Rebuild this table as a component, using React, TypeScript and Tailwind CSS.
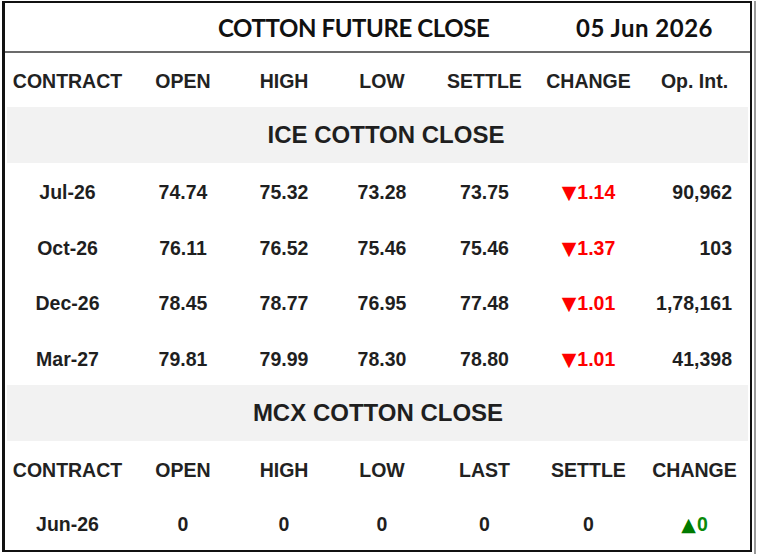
import React from "react";

const cols = "grid grid-cols-[125px_106px_96px_100px_105px_103px_109px]";

const ice = [
  ["Jul-26", "74.74", "75.32", "73.28", "73.75", "1.14", "90,962"],
  ["Oct-26", "76.11", "76.52", "75.46", "75.46", "1.37", "103"],
  ["Dec-26", "78.45", "78.77", "76.95", "77.48", "1.01", "1,78,161"],
  ["Mar-27", "79.81", "79.99", "78.30", "78.80", "1.01", "41,398"],
];

function Band({ label, pad }: { label: string; pad: string }) {
  return (
    <div className={`mx-[2px] h-[56px] bg-[#f2f2f2] flex items-center justify-center text-[24px] font-bold text-[#1f1f1f] ${pad}`}>
      {label}
    </div>
  );
}

function HeaderRow({ labels, h }: { labels: string[]; h: string }) {
  return (
    <div className={`${cols} ${h} pt-[3px] items-center text-[19.5px] font-bold text-[#222]`}>
      {labels.map((l, i) => (
        <div key={i} className="text-center">
          {l}
        </div>
      ))}
    </div>
  );
}

export default function App() {
  return (
    <div className="w-[757px] h-[555px] bg-white font-['Liberation_Sans',Arial,sans-serif]">
      <div className="pt-[1px] pl-[2px]">
        <div className="w-[754px] h-[553px] border-r-[2px] border-[#9a9a9a]">
          <div className="w-[750px] h-[551px] border-[2px] border-[#111] border-l-[3px] flex flex-col">
            <div className="h-[48px] pt-[1px] flex items-center text-[#111] font-bold text-[24px] font-['Lato','Open_Sans',sans-serif]">
              <div className="ml-[213px] w-[271px] tracking-[-0.4px] whitespace-nowrap">COTTON FUTURE CLOSE</div>
              <div className="ml-[87px] tracking-[0.5px] whitespace-nowrap">05 Jun 2026</div>
            </div>
            <div className="h-[2px] bg-[#6b6b6b]" />
            <HeaderRow h="h-[54px]" labels={["CONTRACT", "OPEN", "HIGH", "LOW", "SETTLE", "CHANGE", "Op. Int."]} />
            <Band label="ICE COTTON CLOSE" pad="pl-[17px]" />
            {ice.map((r, i) => (
              <div key={i} className={`${cols} h-[55.5px] pt-[4px] items-center text-[19.5px] font-bold text-[#1f1f1f]`}>
                <div className="text-center">{r[0]}</div>
                <div className="text-center">{r[1]}</div>
                <div className="text-center">{r[2]}</div>
                <div className="text-center">{r[3]}</div>
                <div className="text-center">{r[4]}</div>
                <div className="text-center text-[#ff0000] whitespace-nowrap">
                  <span className="text-[19px] font-['DejaVu_Sans',sans-serif] mr-[1px]">▼</span>
                  {r[5]}
                </div>
                <div className="text-right pr-[17px]">{r[6]}</div>
              </div>
            ))}
            <Band label="MCX COTTON CLOSE" pad="pl-[1px]" />
            <HeaderRow h="h-[56px]" labels={["CONTRACT", "OPEN", "HIGH", "LOW", "LAST", "SETTLE", "CHANGE"]} />
            <div className={`${cols} flex-1 pt-[3px] items-center text-[19.5px] font-bold text-[#1f1f1f]`}>
              <div className="text-center">Jun-26</div>
              <div className="text-center">0</div>
              <div className="text-center">0</div>
              <div className="text-center">0</div>
              <div className="text-center">0</div>
              <div className="text-center">0</div>
              <div className="text-center text-[#0a8a0a] whitespace-nowrap">
                <span className="text-[19px] font-['DejaVu_Sans',sans-serif] text-[#007a00] mr-[1px]">▲</span>0
              </div>
            </div>
          </div>
        </div>
      </div>
    </div>
  );
}
